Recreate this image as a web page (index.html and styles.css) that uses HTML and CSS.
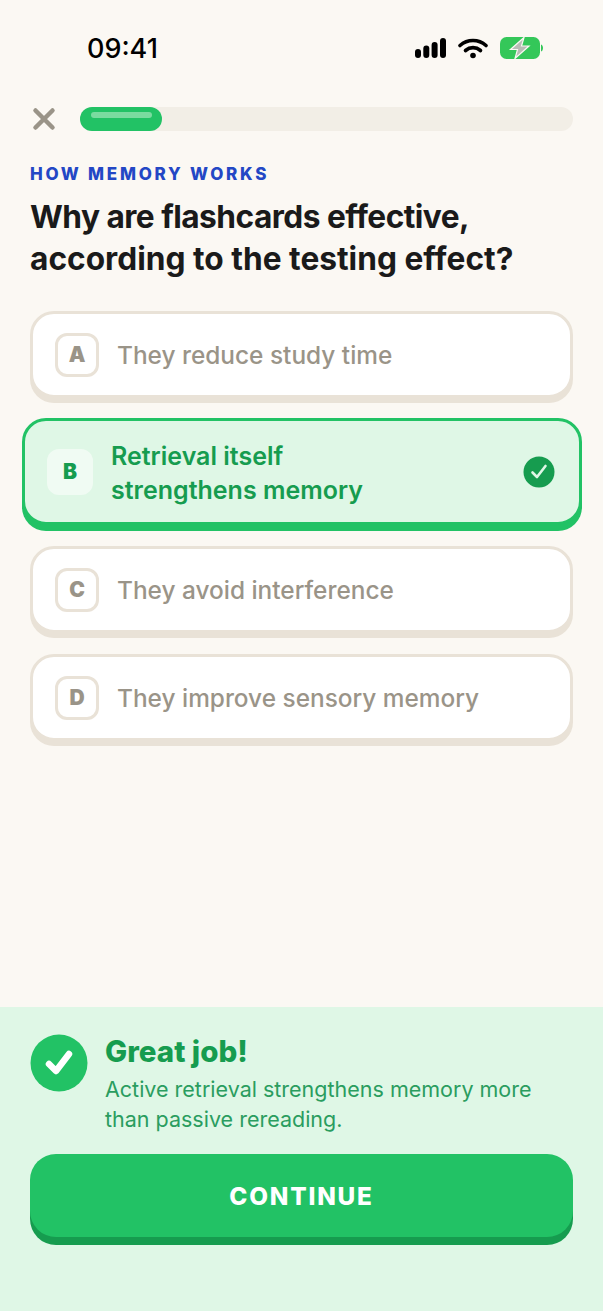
FILE: index.html
```html
<!DOCTYPE html>
<html>
	<head>
		<meta charset="utf-8" />
		<title>How Memory Works</title>
		<link rel="stylesheet" href="styles.css">
	</head>
	<body>
		<div class="status">
			<span class="time">09:41</span>
			<div class="status-icons">
				<svg width="31" height="20" viewBox="0 0 31 20"><rect x="0" y="11" width="6" height="9" rx="3"/><rect x="8.300" y="7.500" width="6" height="12.500" rx="3"/><rect x="16.600" y="4" width="6" height="16" rx="3"/><rect x="25" y="0" width="6" height="20" rx="3"/></svg>
				<svg width="30" height="21" viewBox="0 0 30 21" fill="none" stroke="#000" stroke-width="3.600" stroke-linecap="round"><path d="M2 7.500C9.500 .8 20.500 .8 28 7.500"/><path d="M7.500 12.500C12 8.700 18 8.700 22.500 12.500"/><circle cx="15" cy="17.500" r="2.800" fill="#000" stroke="none"/></svg>
				<svg width="43" height="22" viewBox="0 0 43 22"><rect x="0" y="0" width="40" height="22" rx="6.500" fill="#34c759"/><path d="M41 7.500c1.500 .5 2 2 2 3.500s-.5 3-2 3.500z" fill="#34c759"/><path d="M24 .5 10.500 12.500h7L15 21.500 29 9h-7.500z" fill="#b9bcb6" stroke="#fbf8f3" stroke-width="1.200"/></svg>
			</div>
		</div>

		<div class="top">
			<svg class="close" width="26" height="26" viewBox="0 0 26 26" fill="none" stroke="#9a9488" stroke-width="4.500" stroke-linecap="round"><path d="M4.500 4.500 21.500 21.500M21.500 4.500 4.500 21.500"/></svg>
			<div class="track"><div class="fill"><div class="shine"></div></div></div>
		</div>

		<main class="quiz">
			<div class="eyebrow">HOW MEMORY WORKS</div>
			<h1><span class="line-one">Why are flashcards effective,</span><br>according to the testing effect?</h1>

			<div class="options">
				<div class="option">
					<span class="letter">A</span>
					<span class="label">They reduce study time</span>
				</div>
				<div class="option correct">
					<span class="letter">B</span>
					<span class="label">Retrieval itself<br>strengthens memory</span>
					<svg class="tick" width="32" height="32" viewBox="0 0 32 32"><circle cx="16" cy="16" r="15.500" fill="#169c4f"/><path d="M9.500 16.500 14 21 22.500 10" fill="none" stroke="#dff7e6" stroke-width="2.600" stroke-linecap="round" stroke-linejoin="round"/></svg>
				</div>
				<div class="option">
					<span class="letter">C</span>
					<span class="label">They avoid interference</span>
				</div>
				<div class="option">
					<span class="letter">D</span>
					<span class="label">They improve sensory memory</span>
				</div>
			</div>
		</main>

		<section class="feedback">
			<div class="result">
				<svg class="badge" width="58" height="58" viewBox="0 0 58 58"><circle cx="29" cy="29" r="28.500" fill="#22c265"/><path d="M19 30 26 37 39 20" fill="none" stroke="#fff" stroke-width="6.500" stroke-linecap="round" stroke-linejoin="round"/></svg>
				<div>
					<h2>Great job!</h2>
					<p>Active retrieval strengthens memory more than passive rereading.</p>
				</div>
			</div>
			<button class="continue">CONTINUE</button>
		</section>
	</body>
</html>
```

FILE: styles.css
```css
html { background: #fbf8f3; }
body {
	margin: 0;
	min-height: 1311px;
	display: flex;
	flex-direction: column;
	font-family: Inter, 'Noto Sans', sans-serif;
	color: #1a1a1a;
	overflow: hidden;
}

.status {
	display: flex;
	justify-content: space-between;
	align-items: center;
	height: 30px;
	margin-top: 33px;
	padding: 0 60px 0 87px;
}
.time { font-size: 27px; font-weight: 500; color: #000; }
.status-icons { display: flex; align-items: center; gap: 12px; }

.top {
	display: flex;
	align-items: center;
	gap: 23px;
	margin-top: 43px;
	padding: 0 30px 0 31px;
}
.track { flex: 1; height: 24px; border-radius: 12px; background: #f2eee6; }
.fill { width: 82px; height: 24px; border-radius: 12px; background: #22c265; padding: 5px 10px 0 11px; box-sizing: border-box; }
.shine { height: 6px; border-radius: 3px; background: #7adb9f; }

.quiz { padding: 0 30px; }
.eyebrow {
	margin-top: 32px;
	font-size: 17px;
	line-height: 20px;
	font-weight: 800;
	letter-spacing: 2.750px;
	color: #2347c5;
}
h1 {
	margin: 12px 0 0;
	font-size: 31.700px;
	line-height: 42px;
	font-weight: 700;
	color: #1a1a1a;
}
.line-one { letter-spacing: -0.550px; }

.options { display: flex; flex-direction: column; gap: 21px; margin-top: 31px; }
.option {
	display: flex;
	align-items: center;
	gap: 18px;
	min-height: 87px;
	padding: 0 21px 0 22px;
	border: 3px solid #e9e2d7;
	border-radius: 24px;
	background: #fff;
	box-shadow: 0 5px 0 #e9e2d7;
	box-sizing: border-box;
}
.letter {
	display: flex;
	align-items: center;
	justify-content: center;
	flex: none;
	width: 44px;
	height: 44px;
	border: 3px solid #e9e2d7;
	border-radius: 12px;
	box-sizing: border-box;
	font-size: 21px;
	font-weight: 900;
	color: #9a9488;
}
.label { font-size: 24.400px; line-height: 34px; font-weight: 500; color: #9a9488; }

.correct {
	min-height: 107px;
	margin: -1px -9px 0 -8px;
	padding: 0 24px 0 22px;
	border-color: #22c265;
	background: #dff7e6;
	box-shadow: 0 6px 0 #22c265;
}
.correct .letter { width: 46px; height: 46px; background: #f0fbf3; border-color: #f0fbf3; color: #169c4f; }
.correct .label { flex: 1; padding-top: 2px; font-size: 25px; font-weight: 600; color: #169c4f; }
.correct .tick { flex: none; }

.feedback {
	margin-top: auto;
	height: 304px;
	box-sizing: border-box;
	padding: 27px 30px 0;
	background: #dff7e6;
}
.result { display: flex; gap: 17px; min-height: 120px; }
.badge { flex: none; }
h2 { margin: -1px 0 0; font-size: 29.500px; line-height: 36px; font-weight: 800; color: #169c4f; }
.feedback p {
	max-width: 440px;
	margin: 5px 0 0;
	font-size: 21.500px;
	line-height: 30px;
	color: #2a9d5f;
}
.continue {
	display: block;
	width: 100%;
	height: 83px;
	border: 0;
	border-radius: 26px;
	background: #22c265;
	box-shadow: 0 8px 0 #169c4f;
	font-family: inherit;
	font-size: 24.300px;
	font-weight: 800;
	letter-spacing: 1.800px;
	color: #fff;
}
```
